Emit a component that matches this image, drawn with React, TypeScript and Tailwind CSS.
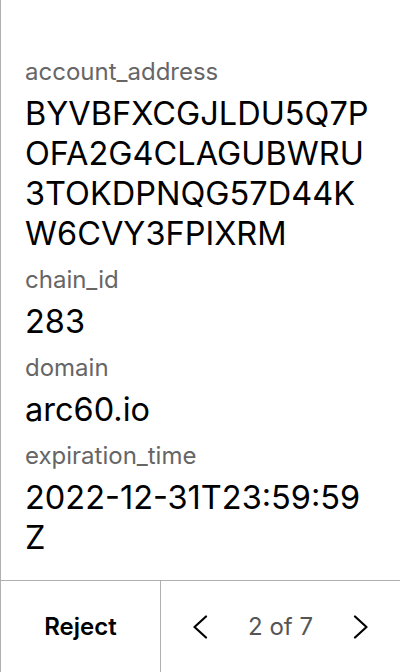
const fields = [
  { label: 'account_address', value: 'BYVBFXCGJLDU5Q7POFA2G4CLAGUBWRU3TOKDPNQG57D44KW6CVY3FPIXRM' },
  { label: 'chain_id', value: '283' },
  { label: 'domain', value: 'arc60.io' },
  { label: 'expiration_time', value: '2022-12-31T23:59:59Z' },
]

function Chevron({ dir }: { dir: 'left' | 'right' }) {
  return (
    <svg width="16" height="24" viewBox="0 0 16 24" fill="none" stroke="black" strokeWidth="2.2" strokeLinecap="round" strokeLinejoin="round">
      {dir === 'left' ? <polyline points="14,1.5 2.5,12 14,22.5" /> : <polyline points="2,1.5 13.5,12 2,22.5" />}
    </svg>
  )
}

export default function App() {
  return (
    <div className="h-[672px] w-[400px] flex flex-col bg-white border-l border-[#b0b0b0] font-['Inter',sans-serif] overflow-hidden">
      <div className="flex-1 px-6 pt-[56px] flex flex-col gap-[10px]">
        {fields.map((f) => (
          <div key={f.label} className="flex flex-col gap-[6px]">
            <div className="text-[24px] leading-[32px] text-[#666666]">{f.label}</div>
            <div className="text-[32.5px] leading-[40px] text-black break-all">{f.value}</div>
          </div>
        ))}
      </div>

      {/* Footer */}
      <div className="h-[92px] shrink-0 flex border-t border-[#b0b0b0]">
        <button className="w-[160px] flex items-center justify-center text-[24px] font-semibold text-black border-r border-[#b0b0b0]">
          Reject
        </button>
        <div className="flex-1 flex items-center justify-between pl-[31px] pr-[31px]">
          <Chevron dir="left" />
          <span className="text-[24px] text-[#555555]">2 of 7</span>
          <Chevron dir="right" />
        </div>
      </div>
    </div>
  )
}
